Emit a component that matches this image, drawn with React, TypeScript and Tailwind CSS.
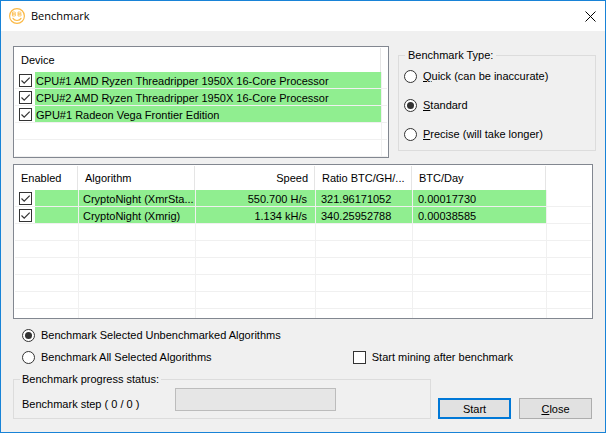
import type { ComponentProps, ReactNode } from "react";

const devices = [
  "CPU#1 AMD Ryzen Threadripper 1950X 16-Core Processor",
  "CPU#2 AMD Ryzen Threadripper 1950X 16-Core Processor",
  "GPU#1 Radeon Vega Frontier Edition",
];

const algorithms = [
  { name: "CryptoNight (XmrSta...", speed: "550.700 H/s", ratio: "321.96171052", perDay: "0.00017730" },
  { name: "CryptoNight (Xmrig)", speed: "1.134 kH/s", ratio: "340.25952788", perDay: "0.00038585" },
];

const cell = "h-[17px] border-r border-b border-[#f0f0f0] p-0";
const lastCell = "h-[17px] border-b border-[#f0f0f0] p-0";
const green = "h-4 whitespace-nowrap bg-[#90ee90] pt-px leading-4";

export default function App() {
  return (
    <div className="flex min-h-screen w-full flex-col border border-[#1883d7] bg-[#f0f0f0] font-['Liberation_Sans',Arial,sans-serif] text-[11px] leading-4 text-black">
      <TitleBar />
      <main className="flex flex-1 flex-col pr-3 pb-3 pl-3">
        <div className="-mr-[3px] flex gap-[9px] pt-[15px]">
          <DeviceList />
          <BenchmarkType />
        </div>
        <AlgorithmList />

        <div className="flex justify-between pt-2 pr-20 pl-[9px]">
          <div className="flex flex-col gap-[6px]">
            <Radio name="scope" defaultChecked>
              Benchmark Selected Unbenchmarked Algorithms
            </Radio>
            <Radio name="scope">Benchmark All Selected Algorithms</Radio>
          </div>
          <label className="flex items-center gap-[6px] self-end">
            <CheckBox />
            Start mining after benchmark
          </label>
        </div>

        <div className="flex items-end gap-[7px] pt-[6px] pr-px">
          <fieldset className="min-w-0 flex-1 border border-[#dcdcdc] pr-3 pb-[6px] pl-2">
            <legend className="-ml-[2px] px-[2px]">Benchmark progress status:</legend>
            <div className="flex pt-px">
              <span className="w-[153px] pt-2">Benchmark step ( 0 / 0 )</span>
              <div role="progressbar" aria-label="Benchmark progress" className="h-[23px] w-[161px] border border-[#bcbcbc] bg-[#e6e6e6]" />
            </div>
          </fieldset>
          <div className="flex gap-2">
            <button type="button" className="h-[21px] w-[73px] border-2 border-[#0078d7] bg-[#e1e1e1] leading-4">
              Start
            </button>
            <button type="button" className="h-[21px] w-[73px] border border-[#adadad] bg-[#e1e1e1] leading-4">
              <u>C</u>lose
            </button>
          </div>
        </div>
      </main>
    </div>
  );
}

function TitleBar() {
  return (
    <header className="flex h-[30px] items-center bg-white pr-2 pl-2">
      <CoinIcon />
      <h1 className="flex-1 pl-[6px] font-['Open_Sans','Noto_Sans',sans-serif] text-[11px]">Benchmark</h1>
      <button type="button" aria-label="Close window" className="p-px">
        <svg width="11" height="11" viewBox="0 0 11 11" fill="none" stroke="#000" strokeWidth="1">
          <path d="M0.5 0.5l10 10M10.5 0.5l-10 10" />
        </svg>
      </button>
    </header>
  );
}

function DeviceList() {
  return (
    <div className="h-28 min-w-0 flex-1 overflow-hidden border border-[#828790] bg-white p-px">
      <table className="w-full table-fixed border-separate border-spacing-0">
        <colgroup>
          <col />
          <col className="w-[5px]" />
        </colgroup>
        <thead>
          <tr>
            <HeadCell>Device</HeadCell>
            <td className="p-0" />
          </tr>
        </thead>
        <tbody>
          {devices.map((device) => (
            <tr key={device}>
              <td className={cell}>
                <label className="flex items-center">
                  <span className="flex w-5 justify-center">
                    <CheckBox defaultChecked />
                  </span>
                  <span className={`flex-1 pl-px ${green}`}>{device}</span>
                </label>
              </td>
              <td className={lastCell} />
            </tr>
          ))}
          <tr>
            <td className={cell} />
            <td className={lastCell} />
          </tr>
          <tr>
            <td className={cell} />
            <td className={lastCell} />
          </tr>
        </tbody>
      </table>
    </div>
  );
}

function BenchmarkType() {
  return (
    <fieldset className="mt-px h-[104px] w-[198px] border border-[#dcdcdc] pl-[5px]">
      <legend className="ml-px px-[3px]">Benchmark Type:</legend>
      <div className="flex flex-col gap-[13px] pt-[5px]">
        <Radio name="type">
          <u>Q</u>uick (can be inaccurate)
        </Radio>
        <Radio name="type" defaultChecked>
          <u>S</u>tandard
        </Radio>
        <Radio name="type">
          <u>P</u>recise (will take longer)
        </Radio>
      </div>
    </fieldset>
  );
}

function AlgorithmList() {
  return (
    <div className="mt-[6px] h-[155px] overflow-hidden border border-[#828790] bg-white p-px">
      <table className="w-full table-fixed border-separate border-spacing-0">
        <colgroup>
          <col className="w-16" />
          <col className="w-[117px]" />
          <col className="w-[120px]" />
          <col className="w-[97px]" />
          <col className="w-[134px]" />
          <col />
        </colgroup>
        <thead>
          <tr>
            <HeadCell>Enabled</HeadCell>
            <HeadCell>Algorithm</HeadCell>
            <HeadCell right>Speed</HeadCell>
            <HeadCell>Ratio BTC/GH/...</HeadCell>
            <HeadCell>BTC/Day</HeadCell>
            <td className="p-0" />
          </tr>
        </thead>
        <tbody>
          {algorithms.map((a) => (
            <tr key={a.name}>
              <td className={cell}>
                <div className="flex items-center">
                  <span className="flex w-5 justify-center">
                    <CheckBox defaultChecked aria-label={a.name} />
                  </span>
                  <span className={`flex-1 ${green}`} />
                </div>
              </td>
              <td className={cell}>
                <div className={`pl-1 ${green}`}>{a.name}</div>
              </td>
              <td className={cell}>
                <div className={`pr-2 text-right ${green}`}>{a.speed}</div>
              </td>
              <td className={cell}>
                <div className={`pl-[5px] ${green}`}>{a.ratio}</div>
              </td>
              <td className={cell}>
                <div className={`pl-[5px] ${green}`}>{a.perDay}</div>
              </td>
              <td className={lastCell} />
            </tr>
          ))}
          {[0, 1, 2, 3, 4, 5].map((row) => (
            <tr key={row}>
              <td className={cell} />
              <td className={cell} />
              <td className={cell} />
              <td className={cell} />
              <td className={cell} />
              <td className={lastCell} />
            </tr>
          ))}
        </tbody>
      </table>
    </div>
  );
}

function HeadCell({ children, right }: { children: ReactNode; right?: boolean }) {
  return (
    <th className="p-0 font-normal">
      <div
        className={`mr-px h-6 border-r border-[#e5e5e5] pl-[6px] leading-6 whitespace-nowrap ${right ? "pr-[6px] text-right" : "text-left"}`}
      >
        {children}
      </div>
    </th>
  );
}

function CheckBox(props: ComponentProps<"input">) {
  return (
    <span className="relative block size-[13px] shrink-0">
      <input type="checkbox" className="peer block size-[13px] appearance-none border border-[#333] bg-white" {...props} />
      <svg
        className="pointer-events-none absolute inset-0 hidden peer-checked:block"
        width="13"
        height="13"
        viewBox="0 0 13 13"
        fill="none"
        stroke="#333"
        strokeWidth="1.2"
      >
        <path d="M2.5 6.5l2.7 2.7 5.5-5.5" />
      </svg>
    </span>
  );
}

function Radio({ children, ...props }: ComponentProps<"input">) {
  return (
    <label className="flex items-center gap-[6px]">
      <input
        type="radio"
        className="grid size-[13px] shrink-0 appearance-none place-items-center rounded-full border border-[#333] bg-white before:hidden before:size-[7px] before:rounded-full before:bg-[#333] checked:before:block"
        {...props}
      />
      <span>{children}</span>
    </label>
  );
}

function CoinIcon() {
  return (
    <svg width="16" height="16" viewBox="0 0 16 16" fill="none" stroke="#fbb945" strokeLinecap="round">
      <circle cx="8" cy="8" r="7.4" strokeWidth="1.2" />
      <path d="M3.8 4h1.7a1 1 0 0 1 0 2H3.8zM3.8 6h1.9a1 1 0 0 1 0 2H3.8z" strokeWidth="0.8" />
      <path d="M9.4 4h1.7a1 1 0 0 1 0 2H9.4zM9.4 6h1.9a1 1 0 0 1 0 2H9.4z" strokeWidth="0.8" />
      <path d="M4 10.4c1.5 2.8 6.5 2.8 8 0" strokeWidth="1.2" />
    </svg>
  );
}
